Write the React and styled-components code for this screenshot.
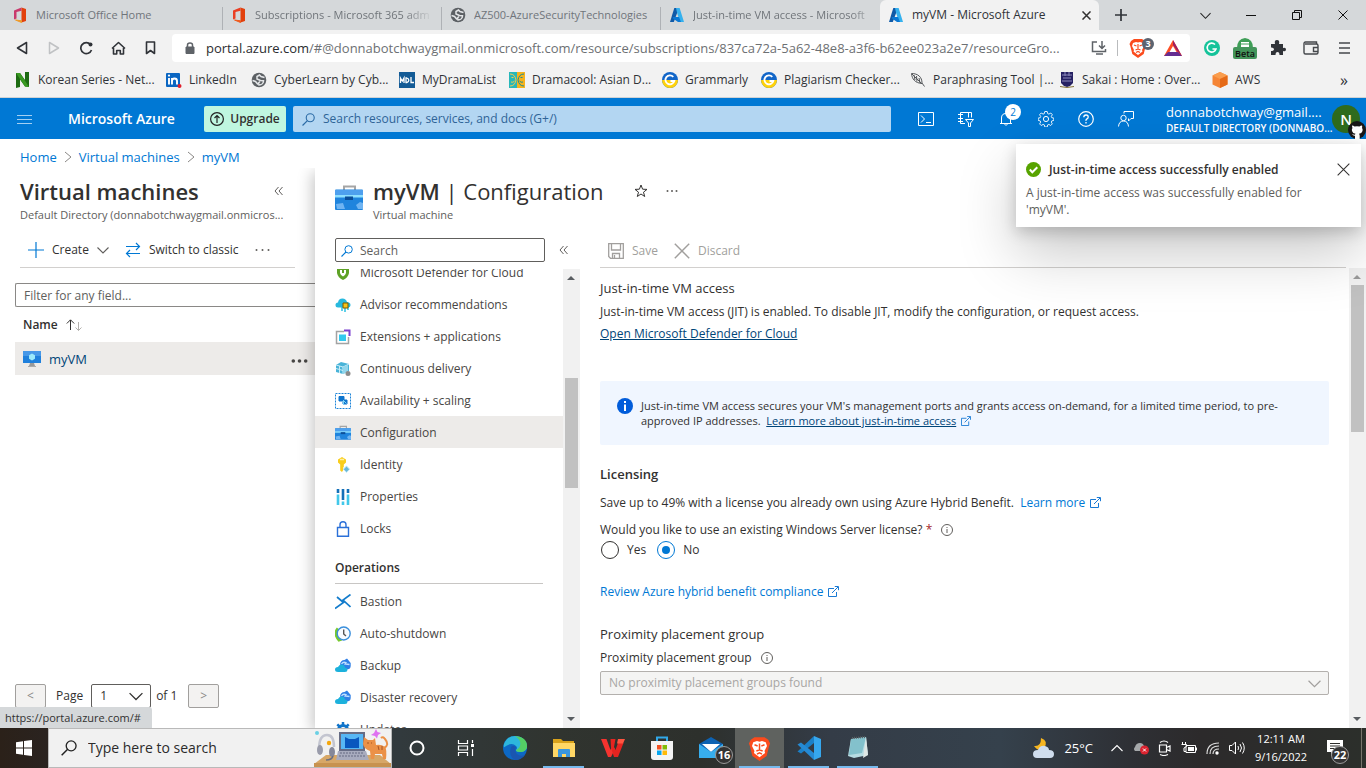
import React, { useLayoutEffect, useRef } from "react";
import styled, { createGlobalStyle, css } from "styled-components";

const Global = createGlobalStyle`
  * { box-sizing: border-box; }
  body { margin: 0; background: #fff; }
  body, button, input, select, table {
    font-family: "Open Sans", "Noto Sans", "Liberation Sans", sans-serif;
    font-size: 12px;
    line-height: 16px;
    color: #323130;
  }
  button { border: 0; padding: 0; background: none; }
  h1, h2, h3, p, ul { margin: 0; padding: 0; font-size: inherit; font-weight: inherit; }
  li { list-style: none; }
  a { color: #0078d4; text-decoration: none; }
  svg { display: block; flex: none; }
`;

const center = css`display: flex; align-items: center; justify-content: center;`;

const Screen = styled.div`
  height: 100vh;
  display: flex;
  flex-direction: column;
  overflow: hidden;
`;

/* ---------- browser chrome ---------- */
const TabStrip = styled.nav`
  flex: none;
  height: 30px;
  display: flex;
  padding-left: 4px;
  background: #d5d8da;
`;
const Tab = styled.a`
  flex: 0 1 219px;
  min-width: 0;
  display: flex;
  align-items: center;
  gap: 8px;
  padding-left: 8px;
  font-size: ${p => (p.$active ? 12 : 11)}px;
  color: ${p => (p.$active ? "#303338" : "#70757a")};
  background: ${p => (p.$active ? "#f2f2f2" : "transparent")};
  border-radius: ${p => (p.$active ? "6px 6px 0 0" : "0")};
`;
const TabText = styled.span`
  flex: 1;
  overflow: hidden;
  white-space: nowrap;
  ${p => p.$fade && css`mask-image: linear-gradient(to right, #000 84%, transparent);`}
`;
const TabRule = styled.span`
  width: 1px;
  height: 23px;
  align-self: flex-end;
  background: #aeb1b5;
`;
const TabClose = styled.button`
  ${center}
  width: 26px;
  height: 26px;
`;
const NewTab = styled.button`
  ${center}
  width: 44px;
`;
const WindowButtons = styled.div`
  margin-left: auto;
  display: flex;
`;
const WindowButton = styled.button`
  ${center}
  width: 46px;
`;
const AddressRow = styled.div`
  flex: none;
  height: 34px;
  display: flex;
  align-items: center;
  padding: 2px 6px 0 6px;
  background: #f2f2f2;
`;
const NavButtons = styled.div`
  display: flex;
  gap: ${p => p.$gap || 0}px;
`;
const NavButton = styled.button`
  ${center}
  width: 32px;
  height: 28px;
`;
const UrlBox = styled.div`
  flex: 1;
  min-width: 0;
  height: 28px;
  margin: 0 6px;
  display: flex;
  align-items: center;
  gap: 10px;
  padding: 0 8px 0 12px;
  background: #fff;
  border-radius: 4px;
`;
const UrlText = styled.span`
  flex: 1;
  min-width: 0;
  overflow: hidden;
  white-space: nowrap;
  text-overflow: ellipsis;
  font-size: 13px;
  line-height: 20px;
  color: #6d7073;
`;
const UrlHost = styled.span`color: #2b2d30;`;
const UrlRule = styled.span`
  width: 1px;
  height: 16px;
  background: #b9bbbd;
`;
const Bookmarks = styled.nav`
  flex: none;
  height: 34px;
  display: flex;
  align-items: center;
  padding: 0 18px 1px 15px;
  background: #f2f2f2;
  border-bottom: 1px solid #d0d2d4;
`;
const Bookmark = styled.a`
  flex: 0 1 ${p => p.$w}px;
  min-width: 0;
  display: flex;
  align-items: center;
  gap: 7px;
  white-space: nowrap;
  color: #303338;
`;
const More = styled.button`
  margin-left: auto;
  font-size: 16px;
  color: #303338;
`;

/* ---------- portal bar ---------- */
const PortalBar = styled.header`
  flex: none;
  height: 41px;
  display: flex;
  align-items: center;
  padding: 1px 6px 0 16px;
  background: #0078d4;
  color: #fff;
`;
const MenuButton = styled.button`
  ${center}
  width: 16px;
  height: 24px;
`;
const Brand = styled.a`
  width: 136px;
  margin-left: 36px;
  font-size: 14px;
  line-height: 20px;
  font-weight: 600;
  color: #fff;
  white-space: nowrap;
`;
const Upgrade = styled.button`
  ${center}
  gap: 6px;
  width: 82px;
  height: 26px;
  border-radius: 2px;
  background: #bff6e0;
  font-weight: 600;
`;
const GlobalSearch = styled.label`
  flex: 1 1 598px;
  max-width: 598px;
  height: 26px;
  margin-left: 7px;
  display: flex;
  align-items: center;
  gap: 8px;
  padding-left: 9px;
  border-radius: 2px;
  background: #b3d6f2;
`;
const PlainInput = styled.input`
  flex: 1;
  min-width: 0;
  padding: 0;
  border: 0;
  outline: 0;
  background: transparent;
  &::placeholder { color: ${p => p.$tone || "#605e5c"}; opacity: 1; }
`;
const PortalIcons = styled.div`
  display: flex;
  margin-left: auto;
`;
const PortalIcon = styled.button`
  ${center}
  position: relative;
  width: 40px;
  height: 40px;
`;
const CountBadge = styled.span`
  ${center}
  position: absolute;
  top: 5px;
  right: 5px;
  width: 16px;
  height: 16px;
  border-radius: 8px;
  background: #fff;
  color: #0078d4;
  font-size: 10px;
`;
const Account = styled.div`
  width: 160px;
  margin-left: 20px;
  padding-top: 1px;
  white-space: nowrap;
`;
const AccountName = styled.div`
  font-size: 13px;
  line-height: 16px;
`;
const AccountDirectory = styled.div`
  font-size: 10px;
  line-height: 16px;
  font-weight: 600;
`;
const Avatar = styled.button`
  ${center}
  position: relative;
  width: 28px;
  height: 28px;
  margin-left: 6px;
  border-radius: 14px;
  background: #2f6b1d;
  color: #fff;
  font-size: 15px;
  font-weight: 600;
`;
const AvatarBadge = styled.span`
  position: absolute;
  left: 16px;
  top: 16px;
`;

/* ---------- portal body ---------- */
const Portal = styled.main`
  position: relative;
  flex: 1;
  min-height: 0;
  display: flex;
  flex-direction: column;
`;
const Breadcrumb = styled.nav`
  flex: none;
  height: 29px;
  display: flex;
  align-items: center;
  gap: 7px;
  padding: 6px 20px 0;
  font-size: 13px;
`;
const Blades = styled.div`
  flex: 1;
  min-height: 0;
  display: flex;
`;
const ListBlade = styled.section`
  flex: none;
  width: 315px;
  display: flex;
  flex-direction: column;
  overflow: hidden;
`;
const BladeHead = styled.div`
  height: 56px;
  padding: 8px 20px 0;
`;
const TitleRow = styled.div`
  display: flex;
  align-items: center;
  justify-content: space-between;
  padding-right: 12px;
`;
const Title = styled.h1`
  font-size: 22px;
  line-height: 30px;
  font-weight: 600;
  white-space: nowrap;
`;
const Light = styled.span`font-weight: 400;`;
const Subtitle = styled.p`
  font-size: 11px;
  line-height: 18px;
  color: #605e5c;
  white-space: nowrap;
`;
const Commands = styled.div`
  flex: none;
  height: 44px;
  margin: 0 20px;
  display: flex;
  align-items: center;
  padding: 9px 0 0 8px;
  border-bottom: 1px solid #d2d0ce;
`;
const Command = styled.button`
  display: flex;
  align-items: center;
  gap: 8px;
  margin-right: 16px;
  color: ${p => (p.disabled ? "#a19f9d" : "#323130")};
`;
const Filter = styled.input`
  flex: none;
  height: 24px;
  margin: 15px 0 0 15px;
  padding: 0 8px;
  border: 1px solid #8a8886;
  border-right: 0;
  border-radius: 2px 0 0 2px;
  outline: 0;
  &::placeholder { color: #605e5c; opacity: 1; }
`;
const Grid = styled.table`
  margin-left: 15px;
  border-collapse: collapse;
  th { height: 35px; padding: 0 8px; text-align: left; font-weight: 600; }
  td { height: 33px; padding: 0 5px 0 8px; background: #edebe9; }
  td:last-child { width: 32px; }
`;
const Inline = styled.span`
  display: flex;
  align-items: center;
  gap: ${p => p.$gap || 8}px;
`;
const VmLink = styled.a`
  display: flex;
  align-items: center;
  gap: 8px;
  font-size: 13px;
  line-height: 18px;
  color: #004578;
`;
const Pager = styled.div`
  margin-top: auto;
  padding: 0 15px 20px;
  display: flex;
  align-items: center;
`;
const PageButton = styled.button`
  width: 31px;
  height: 24px;
  border: 1px solid #a19f9d;
  border-radius: 2px;
  background: #f3f2f1;
  color: #8a8886;
`;
const PageLabel = styled.label`
  display: flex;
  align-items: center;
  gap: 8px;
  margin: 0 5px 0 10px;
`;
const PageOf = styled.span`width: 32px;`;
const SelectWrap = styled.span`
  display: grid;
  align-items: center;
  height: 24px;
  width: ${p => p.$w || "100%"};
  select, svg { grid-area: 1 / 1; }
  svg { justify-self: end; margin-right: 8px; pointer-events: none; }
`;
const Select = styled.select`
  appearance: none;
  width: 100%;
  height: 24px;
  padding: 0 8px;
  border: 1px solid #605e5c;
  border-radius: 2px;
  background: #fff;
  opacity: 1;
  &:disabled { color: #a8a6a4; border-color: #b3b0ad; background: #f4f4f3; }
`;
const StatusBubble = styled.div`
  position: absolute;
  left: 0;
  bottom: 0;
  width: 152px;
  height: 21px;
  padding: 3px 5px;
  background: #d5d8da;
  border-radius: 0 3px 0 0;
  font-size: 11px;
  white-space: nowrap;
`;

const VmBlade = styled.section`
  flex: 1;
  min-width: 0;
  display: flex;
  flex-direction: column;
  background: #fff;
  box-shadow: -3px 4px 14px rgba(0, 0, 0, 0.22);
  clip-path: inset(0 0 0 -20px);
`;
const VmHead = styled.div`
  flex: none;
  height: 70px;
  display: flex;
  padding: 8px 20px 0;
`;
const VmIcon = styled.span`
  width: 38px;
  padding-top: 8px;
`;
const HeadActions = styled.div`
  display: flex;
  align-items: center;
  gap: 18px;
  height: 30px;
  margin-left: 30px;
`;
const VmBody = styled.div`
  flex: 1;
  min-height: 0;
  display: flex;
`;
const Side = styled.aside`
  flex: none;
  width: 265px;
  display: flex;
  flex-direction: column;
`;
const SideTop = styled.div`
  flex: none;
  display: flex;
  align-items: center;
  gap: 14px;
  padding-left: 20px;
  height: 24px;
  margin-bottom: 7px;
`;
const MenuSearch = styled.label`
  width: 210px;
  height: 24px;
  display: flex;
  align-items: center;
  gap: 7px;
  padding: 1px 5px 0;
  border: 1px solid #605e5c;
  border-radius: 2px;
`;
const SideScroll = styled.div`
  flex: 1;
  min-height: 0;
  display: flex;
`;
const MenuView = styled.nav`
  flex: 1;
  overflow: auto;
  scrollbar-width: none;
`;
const MenuItem = styled.a`
  height: 32px;
  display: flex;
  align-items: center;
  gap: 9px;
  padding: 2px 0 0 20px;
  color: #484644;
  background: ${p => (p.$on ? "#edebe9" : "transparent")};
`;
const MenuHeading = styled.h3`
  height: 40px;
  margin: 0 20px 1px;
  padding-top: 16px;
  font-weight: 600;
  border-bottom: 1px solid #c8c6c4;
`;
const Track = styled.div`
  flex: none;
  width: 17px;
  display: flex;
  flex-direction: column;
  align-items: center;
  justify-content: space-between;
  background: #f1f1f1;
`;
const TrackEnd = styled.span`
  ${center}
  height: 17px;
`;
const TrackRun = styled.div`
  flex: 1;
  padding-top: ${p => p.$from}px;
`;
const Thumb = styled.div`
  width: 13px;
  height: ${p => p.$size}px;
  background: #c1c1c1;
`;
const Work = styled.div`
  flex: 1;
  min-width: 0;
  display: flex;
  flex-direction: column;
`;
const WorkCommands = styled(Commands)`
  height: 30px;
  padding: 0 0 4px 8px;
`;
const WorkScroll = styled.div`
  flex: 1;
  min-height: 0;
  display: flex;
`;
const Form = styled.div`
  flex: 1;
  min-width: 0;
  padding: 12px 20px 0;
  overflow: hidden;
`;
const Section = styled.section`margin-bottom: ${p => p.$after}px;`;
const Heading = styled.h2`
  font-size: 13px;
  line-height: 16px;
  font-weight: ${p => (p.$strong ? 600 : 400)};
  margin-bottom: ${p => p.$after}px;
`;
const Line = styled.p`
  margin-bottom: ${p => p.$after || 0}px;
`;
const DarkLink = styled.a`
  color: #004578;
  text-decoration: underline;
`;
const OutLink = styled.a`
  svg { display: inline-block; margin-left: 5px; vertical-align: -1px; }
`;
const InfoBox = styled.div`
  min-height: 64px;
  display: flex;
  gap: 8px;
  padding: 17px 16px 17px 17px;
  border-radius: 2px;
  background: #f0f6ff;
  font-size: 11px;
  line-height: 15px;
`;
const Required = styled.span`color: #a4262c;`;
const FieldLabel = styled.label`
  display: block;
  margin-bottom: 5px;
`;
const Radios = styled.div`
  display: flex;
  gap: 10px;
  height: 20px;
  margin-top: 2px;
`;
const RadioLabel = styled.label`
  display: flex;
  align-items: center;
  gap: 8px;
`;
const Radio = styled.input`
  appearance: none;
  ${center}
  width: 18px;
  height: 18px;
  margin: 0 0 0 1px;
  border: 1px solid #323130;
  border-radius: 9px;
  &:checked { border-color: #0078d4; }
  &:checked::after {
    content: "";
    width: 8px;
    height: 8px;
    border-radius: 4px;
    background: #0078d4;
  }
`;

const Toast = styled.div`
  position: absolute;
  top: 5px;
  right: 5px;
  width: 345px;
  height: 83px;
  padding: 15px 11px 0 10px;
  background: #fff;
  box-shadow: 0 26px 58px rgba(0, 0, 0, 0.22), 0 5px 14px rgba(0, 0, 0, 0.18);
  line-height: 17px;
  color: #605e5c;
`;
const ToastHead = styled.div`
  display: flex;
  align-items: center;
  gap: 8px;
  height: 20px;
  margin-bottom: 5px;
  font-weight: 600;
  color: #323130;
`;
const ToastBody = styled.p`padding-right: 28px;`;
const ToastClose = styled.button`margin-left: auto;`;

/* ---------- desktop taskbar ---------- */
const Taskbar = styled.footer`
  flex: none;
  height: 40px;
  display: flex;
  background: linear-gradient(90deg, #2b2119 0, #2a2320 48px, #323a3d 400px, #30342f 560px, #2d302c 700px, #343c47 830px, #35414c 1000px, #2e3035 1130px, #2c2a2b 1200px, #2c2f2b 1366px);
  color: #fff;
`;
const StartButton = styled.button`
  ${center}
  width: 48px;
`;
const TaskSearch = styled.label`
  flex: 0 1 344px;
  display: flex;
  align-items: center;
  gap: 11px;
  padding-left: 12px;
  background: #f1f1f1;
  border: 1px solid #b9b9b9;
  input { font-size: 14px; line-height: 20px; }
`;
const Task = styled.button`
  ${center}
  position: relative;
  width: 49px;
  background: ${p => (p.$active ? "#5f625f" : "transparent")};
`;
const TaskLine = styled.span`
  position: absolute;
  bottom: 0;
  left: 4px;
  right: 4px;
  height: 2px;
  background: #76b9ed;
`;
const TaskCount = styled.span`
  ${center}
  position: absolute;
  right: ${p => p.$right}px;
  bottom: 4px;
  width: 18px;
  height: 18px;
  border: 1px solid #9a9a9a;
  border-radius: 9px;
  background: #333;
  color: #fff;
  font-size: 11px;
  font-weight: 700;
`;
const Tray = styled.div`
  margin-left: auto;
  display: flex;
  align-items: center;
`;
const Weather = styled.button`
  display: flex;
  align-items: center;
  gap: 8px;
  margin-right: 12px;
  color: #fff;
  font-size: 13px;
`;
const TrayButton = styled.button`
  ${center}
  width: 24px;
  height: 40px;
`;
const Clock = styled.button`
  width: 64px;
  color: #fff;
  font-size: 11px;
  line-height: 18px;
  text-align: center;
  white-space: nowrap;
`;
const Notices = styled.button`
  ${center}
  position: relative;
  width: 49px;
  height: 40px;
  padding-right: 4px;
  border-right: 1px solid #77746c;
  margin-right: 4px;
`;

/* ---------- drawings ---------- */
const Svg = ({ w = 16, h, box, children, ...rest }) => (
  <svg width={w} height={h || w} viewBox={box || `0 0 ${w} ${h || w}`} fill="none" aria-hidden="true" {...rest}>{children}</svg>
);
const Office = ({ left = "#ea3e23", top = "#ef5a1c" }) => (
  <Svg>
    <path d="M9.500.500 2 3.500v9l2.500-1V5l5-1.300z" fill={left} />
    <path d="M9.500.500 14 2v12l-4.500 1.500z" fill="#e2400d" />
    <path d="m3.500 13 6 .8v1.700z" fill={top} stroke={top} />
  </Svg>
);
const Globe = () => (
  <Svg>
    <circle cx="8" cy="8" r="7.300" fill="#5c6064" />
    <path d="M13.500 5.500 10 4.500 8.500 3 6 4.500V7l3.500 1.500 3 .2c0 2.500-2 4.300-4.500 4.300l-.5-2L9 9.500M1.500 8.500l3 1 2.500 3" stroke="#e4e6e8" strokeWidth="1.500" />
  </Svg>
);
const AzureMark = () => (
  <Svg>
    <path d="M5.300 1H10L4.800 15H1z" fill="#0f5aa8" />
    <path d="M7 1h3.600L15 15h-4L8.400 7z" fill="#35b1ee" />
    <path d="M4 10h6l2 5H9L4 11.500z" fill="#0a78d4" />
  </Svg>
);
const Cross = ({ s = 10, c = "#323130", t = 1 }) => (
  <Svg w={s} box="0 0 10 10"><path d="m.500.500 9 9m0-9-9 9" stroke={c} strokeWidth={t} /></Svg>
);
const Chevron = ({ w = 12, c = "#605e5c", up }) => (
  <Svg w={w} h={w} box="0 0 12 12"><path d={up ? "m.500 9 5.500-5.500L11.500 9" : "m.500 3.500 5.500 5.500 5.500-5.500"} stroke={c} strokeWidth="1.100" /></Svg>
);
const Crumb = () => <Svg w={8} h={12}><path d="m1 1 6 5-6 5" stroke="#8a8886" /></Svg>;
const Collapse = () => <Svg w={9} h={10}><path d="M4.500 1 1 5l3.500 4M8.500 1 5 5l3.500 4" stroke="#605e5c" /></Svg>;
const Dots = ({ w = 15, r = 1, c = "#605e5c" }) => (
  <Svg w={w} h={4} box={`0 0 ${w} 4`}>{[r + 0.5, w / 2, w - r - 0.5].map(x => <circle key={x} cx={x} cy="2" r={r} fill={c} />)}</Svg>
);
const Lens = ({ s = 12, c = "#0078d4" }) => (
  <Svg w={s} box="0 0 12 12"><circle cx="7.600" cy="4.400" r="3.700" stroke={c} /><path d="M5 7 .500 11.500" stroke={c} strokeWidth="1.100" /></Svg>
);
const External = ({ s = 11 }) => (
  <Svg w={s} box="0 0 11 11"><path d="M6 2.500H.500v8h8V6M4 7l6-6M6.800.500h3.700v3.700" stroke="#1a7ad4" /></Svg>
);
const InfoRing = () => (
  <Svg w={12}><circle cx="6" cy="6" r="5.500" stroke="#605e5c" /><path d="M6 5v4M6 3v1" stroke="#605e5c" /></Svg>
);
const Arrow = ({ up, c = "#595d61" }) => <Svg w={9} h={5}><path d={up ? "M0 5h8L4 1z" : "M0 0h8L4 4z"} fill={c} /></Svg>;
const Toolbox = ({ s = 16 }) => (
  <Svg w={s} box="0 0 28 28">
    <path d="M9 6V2.500h11V6" stroke="#a5a5a5" strokeWidth="2" />
    <rect x="0" y="5.500" width="28" height="20.500" rx="1" fill="#1f84dd" />
    <path d="M0 6h28v6H0z" fill="#4ea0ee" /><path d="M0 11h28v2.500H0z" fill="#8fe0ff" />
    <rect x="10" y="12.500" width="8" height="3.500" fill="#0b4f99" />
    <path d="m1 20 7-1 2 6H2zM21 21l4-3 3 1v6h-5z" fill="#6fb4f2" />
  </Svg>
);
const Lion = () => (
  <>
    <path d="m6 1-3 2-1.500 3 .8 2 2 8 5.700 4 5.700-4 2-8 .8-2L17 3l-3-2z" fill="#fb4b1d" />
    <path d="m5 5 3-1 2 .6L12 4l3 1 1 3-2 4 .5 1.500L10 17l-4.500-3.500L6 12 4 8z" fill="#fff" />
    <path d="m6 7 2.500 1M14 7l-2.500 1M10 6v5m-2.500 1 2.500-1 2.500 1M8 14.500l2-1 2 1" stroke="#fb4b1d" strokeWidth="1.200" />
  </>
);
const Grammarly = () => (
  <Svg>
    <circle cx="8" cy="8" r="8" fill="#1266c8" /><path d="M0 8h16a8 8 0 0 1-16 0" fill="#ffd20a" />
    <path d="M11.300 4.800A4.500 4.500 0 1 0 12.300 9H8.500" stroke="#fff" strokeWidth="1.800" />
  </Svg>
);

const bookmarks = [
  ["Korean Series - Net...", 151, <Svg><path d="M1 1h4l5 7V0h4v15l-4-.5-5-7V15l-4 1z" fill="#1d6b12" /><path d="M1 1h4l9 14-4-.5z" fill="#3a9a22" /></Svg>],
  ["LinkedIn", 85, <Svg><rect y="1" width="14" height="14" rx="1" fill="#0a66c2" /><path d="M3 6v6.500M6 6v6.500M6 9q0-2.500 2.500-2.500T11 9v3.500" stroke="#fff" strokeWidth="1.900" /><circle cx="3" cy="3.600" r="1.100" fill="#fff" /><circle cx="13.500" cy="14" r="2" fill="#e01e2b" /></Svg>],
  ["CyberLearn by Cyb...", 148, <Globe />],
  ["MyDramaList", 110, <Svg><path d="M0 0h16v16H0z" fill="#135b96" /><path d="M1.500 11V6L3.300 9 5 6v5M7 6v4.500h.8q2-.5 2-2.200T7.800 6zM12 5v5.500h3" stroke="#fff" strokeWidth="1.300" /></Svg>],
  ["Dramacool: Asian D...", 153, <Svg><path d="M0 0h8v16H0z" fill="#27b7ba" /><path d="M8 0h8v16H8z" fill="#f6b21b" /><path d="M1 2q5 0 6 6-1 6-6 6M2.500 5.500h2M2 10q2 1 3.500-1" stroke="#f6c94a" /><path d="M15 2q-5 0-6 6 1 6 6 6m-1.500-8.500h-2M14 10q-2 1-3.500-1" stroke="#188f9a" /></Svg>],
  ["Grammarly", 99, <Grammarly />],
  ["Plagiarism Checker...", 149, <Grammarly />],
  ["Paraphrasing Tool |...", 149, <Svg><path d="M1.500 1.500C8 1.500 12 5 12 11l2.500 3.500M1.500 1.500C2 7 5 11 12 11.500M2 2l10 10M4 3l1 5M6.500 4 7 9.500M9 6l1 5" stroke="#55585b" /></Svg>],
  ["Sakai : Home : Over...", 153, <Svg><path d="M2 0h12v11q-2 3-6 4-4-1-6-4z" fill="#262163" /><path d="M3 3h10M4 6h8M3 9h10M6 0v4m4-4v4" stroke="#8d8bbd" /><path d="M1 14.500q7 2 14 0" stroke="#857339" /></Svg>],
  ["AWS", 90, <Svg><path d="m8 0 7.500 3.500v9L8 16 .500 12.500v-9z" fill="#f58536" /><path d="m8 0 7.500 3.500L8 7 .500 3.500z" fill="#fa9d4d" /><path d="M8 7v9l7.500-3.500v-9z" fill="#e56a17" /></Svg>],
];

const Recovery = () => (
  <Svg>
    <path d="M5 6.500Q5.500 2 9.500 2l2.500-1.500L15.700 5v3q0 3.500-4.700 3.500z" fill="#2f7fe6" />
    <path d="M6.500 6q1.500-2.500 4.500-1.500L10 6l4.500.5" stroke="#bfe0ff" strokeWidth="1.300" />
    <path d="M3 14q-3 0-3-2.500T3 9q1-2.500 3.500-2.500 3 0 3.500 3 2.500.2 2.500 2.300Q12.500 14 10 14z" fill="#1cb1dc" />
  </Svg>
);
const menuIcons = {
  shield: <Svg><path d="M2 1h12v7q-1 5-6 7-5-2-6-7z" fill="#5ea226" /><path d="M5 5h6v3q-1 3-3 3.500Q6 11 5 8z" fill="#fff" /><path d="M8 5v3" stroke="#5ea226" strokeWidth="2" /></Svg>,
  advisor: <Svg><path d="M3 10.500Q.500 10.500.500 8T3 5.500q.5-4 4.500-4 3.500 0 4.500 3.500 3.500.3 3.500 3 0 2.500-3 2.500z" fill="#27b9de" /><path d="M7 10v4m3-4v5m3-5v3" stroke="#2cc1e2" strokeWidth="1.500" /><path d="M8 6h5v5H8z" fill="#f6c317" stroke="#7b5b00" /></Svg>,
  extensions: <Svg><path d="M9 2.500H1.500v12h12V8" stroke="#a3a3a3" strokeWidth="1.500" /><path d="M4 5.500h7v6.500H4z" fill="#32c8ee" /><path d="M9 1.500h5.500V7" stroke="#7b3fd0" strokeWidth="2" /></Svg>,
  delivery: <Svg><path d="m1 4 5-3 8 2v7l-6 3-7-2z" fill="#49b3d8" /><path d="m1 4 7 2 6-3M8 6v7M4.500 5v7M1 7.500l7 2" stroke="#c9eef9" /><path d="m8 6 5-2v7l-5 2z" fill="#92d6ec" /><circle cx="13" cy="12.500" r="2.500" fill="#8b8b8b" /></Svg>,
  scaling: <Svg><rect x=".500" y=".500" width="15" height="15" stroke="#1c84d8" strokeDasharray="2 1" /><path d="M4 3.500h5V8H4zM9 7h3v4H8V9" fill="#0e75cd" stroke="#0e75cd" /><path d="m8 7 3.500 3.500m-3-3V12" stroke="#7ad3f7" /></Svg>,
  identity: <Svg><path d="m7 0 4 2.500v3L8.800 7.500V10l-1 1 1 1.300L7 15l-1.800-1.500V7.500L3 5.500v-3z" fill="#f9cd1c" /><path d="M5 2.500h4" stroke="#fff0a0" strokeWidth="1.500" /><path d="m11.500 9 3.200 3.200-3.200 3.200-3.200-3.200z" fill="#68b6d8" stroke="#c8ecf8" /></Svg>,
  properties: <Svg><path d="M3 0v4M13 0v4M8 0v11" stroke="#1470b8" strokeWidth="2.600" /><path d="M3 5.500V16M13 5.500V16M8 12.500V16" stroke="#42c8ea" strokeWidth="2.600" /></Svg>,
  locks: <Svg><path d="M2.500 6.500h11v8.800h-11zM5 6.500V3.800q0-3 3-3t3 3v2.700" stroke="#2b70d8" strokeWidth="1.400" /></Svg>,
  bastion: <Svg><path d="m2 3 6.500 5.500L0 14.500M15.500.500 8 6l7.500 7" stroke="#137ccc" strokeWidth="1.700" /></Svg>,
  shutdown: <Svg><path d="M3 2.500q-4.500 5 1 11.500l2.500-1" stroke="#77c82f" strokeWidth="3" /><circle cx="8.700" cy="7.500" r="6.500" fill="#f8fbff" stroke="#3a8fdc" strokeWidth="1.400" /><path d="M8.700 3.500V8l2.300 2" stroke="#555" strokeWidth="1.400" /></Svg>,
  recovery: <Recovery />,
  updates: <Svg><circle cx="8" cy="8" r="4.500" stroke="#0f74ca" strokeWidth="3" /><path d="M8 0v3M8 13v3M0 8h3M13 8h3M2.300 2.300l2.200 2.200M11.500 11.500l2.200 2.200M13.700 2.300l-2.200 2.200M4.500 11.500l-2.200 2.200" stroke="#0f74ca" strokeWidth="2.500" /></Svg>,
  toolbox: <Toolbox />,
};
const settingsItems = [
  ["Microsoft Defender for Cloud", "shield"], ["Advisor recommendations", "advisor"],
  ["Extensions + applications", "extensions"], ["Continuous delivery", "delivery"],
  ["Availability + scaling", "scaling"], ["Configuration", "toolbox"],
  ["Identity", "identity"], ["Properties", "properties"], ["Locks", "locks"],
];
const operationItems = [
  ["Bastion", "bastion"], ["Auto-shutdown", "shutdown"], ["Backup", "recovery"],
  ["Disaster recovery", "recovery"], ["Updates", "updates"],
];

const portalIcons = [
  ["Cloud Shell", <Svg><path d="M.500 1.500h15v13H.500zM3 4.500l3.500 3.500L3 11.500M8 11.500h5" stroke="#fff" /></Svg>],
  ["Directories", <Svg><path d="M7 12.500H2.500V1.500h11v5M10.500 1.500v5M0 3.500h5M0 7.500h5M0 10.500h5M7.500 8.500h8L12.500 12v3.500h-2V12z" stroke="#fff" /></Svg>],
  ["Notifications", <Svg><path d="M2 12.500h12M3.500 12V7q0-4.500 4.500-4.500T12.500 7v5M6.500 13q1.500 3 3 0" stroke="#fff" /></Svg>],
  ["Settings", <Svg><circle cx="8" cy="8" r="2.600" stroke="#fff" /><path d="M6.800.500h2.400l.5 2.100 1.200.5L12.800 2l1.500 1.700-1 1.800.5 1.200 2 .4v2.300l-2 .5-.5 1.200 1 1.800-1.600 1.600-1.800-1.100-1.200.5-.5 2.100H6.800l-.5-2.100-1.200-.5-1.900 1.100-1.600-1.600 1.100-1.800-.5-1.200-2-.5V7.100l2-.4.5-1.200-1.100-1.800L3.200 2l1.900 1.100 1.200-.5z" stroke="#fff" strokeWidth=".900" /></Svg>],
  ["Help", <Svg><circle cx="8" cy="8" r="7.300" stroke="#fff" strokeWidth="1.200" /><path d="M5.800 6.300Q5.800 4 8 4t2.200 2q0 1.200-1.200 1.900T8 9.800M8 11v1.500" stroke="#fff" strokeWidth="1.300" /></Svg>],
  ["Feedback", <Svg><circle cx="5.500" cy="7" r="2.700" stroke="#fff" /><path d="M.500 15.500q.5-5.500 5-5.500t5 5.500M6 2.500v-2h9.500v7H13l-2.500 2.500V7.500" stroke="#fff" /></Svg>],
];

const tasks = [
  ["Cortana", <Svg w={16}><circle cx="8" cy="8" r="6.500" stroke="#fff" strokeWidth="2" /></Svg>],
  ["Task View", <Svg w={17} h={16}><path d="M1.500 0v3.500h9V0M1.500 16v-3.500h9V16M1.500 6h9v4h-9zM15.500 0v3M15.500 9v7" stroke="#fff" strokeWidth="1.200" /><path d="M14 4h3v3h-3z" fill="#fff" /></Svg>],
  ["Edge", <Svg w={24}><circle cx="12" cy="12" r="12" fill="#0d68c4" /><path d="M1 8Q4 0 12 0c7 0 12 5 12 10 0 4-3 6-7 6-3 0-4-1-4-2q2-2 0-4-4-4-10 0Q0 13 1 8" fill="#2db6dc" /><path d="M12 0q12 1 12 10c0 4-3 6-7 6-3 0-4-1-4-2 5-2 7-9-1-14" fill="#54cf65" /><path d="M8 11q2-2 5 0-2 4 1 7t8 1q-4 5-10 5-7-4-4-13" fill="#1a56b0" /></Svg>],
  ["Files", <Svg w={22} h={20}><path d="M0 1h8l2 2h11v4H0z" fill="#d9a21b" /><path d="M0 5h22v14H0z" fill="#ffd765" /><path d="M5 19v-7q0-1 1-1h10q1 0 1 1v7h-4v-3H9v3z" fill="#3a96dd" /></Svg>, true],
  ["WPS", <Svg w={24} h={20}><path d="M0 1h5.500l4 11L11 7l3 4-4 8H7z" fill="#f5332f" /><path d="M9.500 1h5L13 9l1.500 3L17 5h5.500L17 19h-4l-3-9z" fill="#e52420" /><path d="M17 1h7l-2 4.500h-6z" fill="#ff5540" /></Svg>],
  ["Store", <Svg w={24}><path d="M7 6V1.500h10V6" stroke="#31a8e8" strokeWidth="2" /><path d="M1 5h22v16q0 3-3 3H4q-3 0-3-3z" fill="#f4f4f4" /><path d="M7 9h4.500v4.500H7z" fill="#f35325" /><path d="M12.500 9H17v4.500h-4.500z" fill="#81bc06" /><path d="M7 14.500h4.500V19H7z" fill="#05a6f0" /><path d="M12.500 14.500H17V19h-4.500z" fill="#ffba08" /></Svg>],
  ["Mail", <Svg w={24} h={24}><path d="M0 8 12 1l12 7v14H0z" fill="#0d62b2" /><path d="M3 8h18l-9 8z" fill="#fff" /><path d="m0 8 12 8 12-8v14H0z" fill="#37aeee" /></Svg>, false, 16],
  ["Brave", <Svg w={25} box="0 0 20 20"><Lion /></Svg>, true],
  ["Code", <Svg w={24}><path d="M17 0v7L4 17.500.500 15.500z" fill="#1b80c8" /><path d="M17 24v-7L4 6.500.500 8.500z" fill="#258ad4" /><path d="m17 0 7 3v18l-7 3z" fill="#36a7ee" /></Svg>, true],
  ["Notepad", <Svg w={24}><path d="m5 3 15-2 2 18-14 3-6-2z" fill="#b7dce3" /><path d="M5 3 20 1l-4 16-13 2z" fill="#83c1cc" /><path d="m20 1 2 18-5 3z" fill="#dfe7e5" /><path d="m6 2 14-1" stroke="#595f62" strokeWidth="2" strokeDasharray="1 1" /></Svg>, true],
];

function VmMenu() {
  const view = useRef(null);
  useLayoutEffect(() => { view.current.scrollTop = 13; }, []);
  const item = ([label, icon]) => (
    <li key={label}><MenuItem href="#" $on={label === "Configuration"}>{menuIcons[icon]}{label}</MenuItem></li>
  );
  return (
    <MenuView ref={view} aria-label="myVM">
      <ul>{settingsItems.map(item)}</ul>
      <MenuHeading>Operations</MenuHeading>
      <ul>{operationItems.map(item)}</ul>
    </MenuView>
  );
}

const Scrollbar = ({ from, size, faded }) => (
  <Track>
    <TrackEnd><Arrow up c={faded ? "#9a9a9a" : undefined} /></TrackEnd>
    <TrackRun $from={from}><Thumb $size={size} /></TrackRun>
    <TrackEnd><Arrow /></TrackEnd>
  </Track>
);

function BrowserChrome() {
  return (
    <>
      <TabStrip>
        <Tab href="#"><Office left="#c93a6d" top="#ee9a2a" /><TabText>Microsoft Office Home</TabText><TabRule /></Tab>
        <Tab href="#"><Office /><TabText $fade>Subscriptions - Microsoft 365 adm</TabText><TabRule /></Tab>
        <Tab href="#"><Globe /><TabText>AZ500-AzureSecurityTechnologies</TabText><TabRule /></Tab>
        <Tab href="#"><AzureMark /><TabText $fade>Just-in-time VM access - Microsoft</TabText></Tab>
        <Tab href="#" $active><AzureMark /><TabText>myVM - Microsoft Azure</TabText><TabClose aria-label="Close tab"><Cross s={9} t={1.7} /></TabClose></Tab>
        <NewTab aria-label="New tab"><Svg w={12}><path d="M6 0v12M0 6h12" stroke="#303338" strokeWidth="1.700" /></Svg></NewTab>
        <WindowButtons>
          <WindowButton aria-label="Search tabs"><Chevron w={11} c="#222" /></WindowButton>
          <WindowButton aria-label="Minimize"><Svg w={10}><path d="M0 5.500h10" stroke="#111" /></Svg></WindowButton>
          <WindowButton aria-label="Restore"><Svg w={10}><path d="M.500 2.500h7v7h-7zM2.500 2V.500h7v7H8" stroke="#111" /></Svg></WindowButton>
          <WindowButton aria-label="Close"><Cross c="#111" /></WindowButton>
        </WindowButtons>
      </TabStrip>
      <AddressRow>
        <NavButtons>
          <NavButton aria-label="Back"><Svg w={12} h={14}><path d="M10.500 1.500v11L1.500 7z" stroke="#303338" strokeWidth="1.600" strokeLinejoin="round" /></Svg></NavButton>
          <NavButton aria-label="Forward"><Svg w={12} h={14}><path d="M1.500 1.500v11L10.500 7z" stroke="#c0c2c4" strokeWidth="1.500" strokeLinejoin="round" /></Svg></NavButton>
          <NavButton aria-label="Reload"><Svg w={14}><path d="M11.500 3.500A5.500 5.500 0 1 0 12.500 9" stroke="#303338" strokeWidth="1.700" /><circle cx="11.500" cy="3.500" r="2" fill="#303338" /></Svg></NavButton>
          <NavButton aria-label="Home"><Svg w={15} h={14}><path d="M1 7.500 7.500 1.500l6.500 6M2.500 7v6h3.200V9.500h3.600V13h3.200V7" stroke="#303338" strokeWidth="1.600" strokeLinejoin="round" /></Svg></NavButton>
          <NavButton aria-label="Bookmark"><Svg w={11} h={14}><path d="M1.500 1h8v11.500l-4-3-4 3z" stroke="#303338" strokeWidth="1.600" strokeLinejoin="round" /></Svg></NavButton>
        </NavButtons>
        <UrlBox>
          <Svg w={12} h={12}><path d="M2 5h8v6.500H2z" fill="#5f6368" stroke="#5f6368" /><path d="M3.500 5V3q0-2 2.500-2t2.500 2v2" stroke="#5f6368" strokeWidth="1.500" /></Svg>
          <UrlText><UrlHost>portal.azure.com</UrlHost>/#@donnabotchwaygmail.onmicrosoft.com/resource/subscriptions/837ca72a-5a62-48e8-a3f6-b62ee023a2e7/resourceGro...</UrlText>
          <Inline $gap={10}>
            <Svg w={16} h={14}><path d="M6 1H1.500v9.500h13V8M5 13h7M11 0v7M8 4.500l3 3 3-3" stroke="#5f6368" strokeWidth="1.500" /></Svg>
            <UrlRule />
            <Svg w={26} h={20}><Lion /><circle cx="20" cy="6" r="6" fill="#5c6370" /><text x="20" y="9" fontSize="9" fontWeight="700" textAnchor="middle" fill="#fff">3</text></Svg>
            <Svg w={18}><path d="M9 1 0 17h18z" fill="#ff4d23" /><path d="m0 17 4-4h10l4 4z" fill="#652d91" /><path d="m9 1 9 16-4-4-5-7z" fill="#9e1f63" /><path d="m9 7 3.500 6h-7z" fill="#fff" /></Svg>
          </Inline>
        </UrlBox>
        <NavButtons $gap={1}>
          <NavButton aria-label="Grammarly"><Svg><circle cx="8" cy="8" r="8" fill="#15c39a" /><path d="M11 4.500A4.500 4.500 0 1 0 12 9H8.500" stroke="#fff" strokeWidth="1.600" /></Svg></NavButton>
          <NavButton aria-label="Beta extension"><Svg w={24} h={22}><path d="M4 11q0-9 8-10 8 1 8 10z" fill="#3f9e57" /><path d="M8 5h8v5H8z" fill="#fff" /><path d="M8 7h8M10 5V3M14 5V3" stroke="#3f9e57" /><rect y="10" width="24" height="12" rx="2" fill="#43955a" /><text x="12" y="20" fontSize="9" fontWeight="600" textAnchor="middle" fill="#111">Beta</text></Svg></NavButton>
          <NavButton aria-label="Extensions"><Svg w={16}><path d="M1 4h4q-1-4 2-4t2 4h4v4q3-1 3 1.500T13 11v4H9.500q0-3-2-3t-2 3H1v-4q3 0 3-1.800T1 7.500z" fill="#303338" /></Svg></NavButton>
          <NavButton aria-label="Wallet"><Svg w={16} h={14}><path d="M13.500 3V1H2.500Q1 1 1 2.500v9Q1 13 2.500 13h11q1.500 0 1.500-1.500v-7Q15 3 13.500 3H2M15 6.500h-4.500v4H15" stroke="#45484c" strokeWidth="1.400" /></Svg></NavButton>
          <NavButton aria-label="Menu"><Svg w={11} h={12}><path d="M0 1h11M0 6h11M0 11h11" stroke="#45484c" strokeWidth="1.500" /></Svg></NavButton>
        </NavButtons>
      </AddressRow>
      <Bookmarks aria-label="Bookmarks">
        {bookmarks.map(([label, w, icon]) => <Bookmark href="#" key={label} $w={w}>{icon}{label}</Bookmark>)}
        <More aria-label="More bookmarks">»</More>
      </Bookmarks>
    </>
  );
}

function VirtualMachines() {
  return (
    <ListBlade>
      <BladeHead>
        <TitleRow>
          <Title>Virtual machines</Title>
          <button aria-label="Collapse list"><Collapse /></button>
        </TitleRow>
        <Subtitle>Default Directory (donnabotchwaygmail.onmicros...</Subtitle>
      </BladeHead>
      <Commands>
        <Command><Svg><path d="M8 0v16M0 8h16" stroke="#0078d4" strokeWidth="1.200" /></Svg>Create<Chevron /></Command>
        <Command><Svg><path d="M1 4.500h14M11 1l3.500 3.500L11 8M15 11.500H1M5 8l-3.500 3.500L5 15" stroke="#0078d4" strokeWidth="1.200" /></Svg>Switch to classic</Command>
        <Command aria-label="More"><Dots /></Command>
      </Commands>
      <Filter placeholder="Filter for any field..." aria-label="Filter" />
      <Grid>
        <thead><tr><th colSpan="2"><Inline>Name<Svg w={16} h={12}><path d="M4.500 11V1M.800 4.500l3.700-3.700 3.700 3.700" stroke="#323130" /><path d="M12.500 3v8.500M9.500 8.500l3 3 3-3" stroke="#b3b0ad" /></Svg></Inline></th></tr></thead>
        <tbody><tr>
          <td><VmLink href="#"><Svg w={18} h={16}><path d="M0 0h18v12H0z" fill="#1f80dc" /><path d="M0 0h18v5H0z" fill="#4698e8" /><path d="m9 2.500 3 1.700v3.600L9 9.500 6 7.800V4.200z" fill="#9be9fb" /><path d="M7 12h4l1 3H6z" fill="#999" /><path d="M5 15.500h8" stroke="#aaa" /></Svg>myVM</VmLink></td>
          <td><button aria-label="Row actions"><Dots w={17} r={1.8} c="#484644" /></button></td>
        </tr></tbody>
      </Grid>
      <Pager>
        <PageButton>&lt;</PageButton>
        <PageLabel>Page<SelectWrap $w="60px"><Select defaultValue="1"><option>1</option></Select><Chevron w={14} c="#323130" /></SelectWrap></PageLabel>
        <PageOf>of 1</PageOf>
        <PageButton>&gt;</PageButton>
      </Pager>
    </ListBlade>
  );
}

function Configuration() {
  return (
    <VmBlade>
      <VmHead>
        <VmIcon><Toolbox s={28} /></VmIcon>
        <div>
          <Title>myVM <Light>| Configuration</Light></Title>
          <Subtitle>Virtual machine</Subtitle>
        </div>
        <HeadActions>
          <button aria-label="Favorite"><Svg w={14}><path d="m7 1 1.600 4.200 4.400.2-3.500 2.800 1.200 4.300L7 10l-3.700 2.500 1.200-4.300L1 5.400l4.400-.2z" stroke="#323130" /></Svg></button>
          <button aria-label="More"><Dots w={12} /></button>
        </HeadActions>
      </VmHead>
      <VmBody>
        <Side>
          <SideTop>
            <MenuSearch><Lens /><PlainInput placeholder="Search" aria-label="Search menu" /></MenuSearch>
            <button aria-label="Collapse menu"><Collapse /></button>
          </SideTop>
          <SideScroll><VmMenu /><Scrollbar from={92} size={110} /></SideScroll>
        </Side>
        <Work>
          <WorkCommands>
            <Command disabled><Svg><path d="M.700.700h14.600v14.600H2.500L.700 13.500zM3.500 1v6h9V1M4.500 15v-4.500h7V15M6.500 12v3" stroke="#a19f9d" strokeWidth="1.300" /></Svg>Save</Command>
            <Command disabled><Cross s={16} c="#a19f9d" t={0.9} />Discard</Command>
          </WorkCommands>
          <WorkScroll>
            <Form>
              <Section $after={39}>
                <Heading $after={8}>Just-in-time VM access</Heading>
                <Line $after={6}>Just-in-time VM access (JIT) is enabled. To disable JIT, modify the configuration, or request access.</Line>
                <Line><DarkLink href="#">Open Microsoft Defender for Cloud</DarkLink></Line>
              </Section>
              <Section $after={21}>
                <InfoBox>
                  <Svg><circle cx="8" cy="8" r="8" fill="#015cda" /><path d="M8 6.500V13M8 3v2" stroke="#fff" strokeWidth="2" /></Svg>
                  <p>Just-in-time VM access secures your VM's management ports and grants access on-demand, for a limited time period, to pre-approved IP addresses. &nbsp;<OutLink href="#"><DarkLink as="span">Learn more about just-in-time access</DarkLink><External s={10} /></OutLink></p>
                </InfoBox>
              </Section>
              <Section $after={24}>
                <Heading $strong $after={13}>Licensing</Heading>
                <Line $after={11}>Save up to 49% with a license you already own using Azure Hybrid Benefit. &nbsp;<OutLink href="#">Learn more<External /></OutLink></Line>
                <Inline $gap={9}><span>Would you like to use an existing Windows Server license? <Required>*</Required></span><InfoRing /></Inline>
                <Radios role="radiogroup" aria-label="Windows Server license">
                  <RadioLabel><Radio type="radio" name="license" />Yes</RadioLabel>
                  <RadioLabel><Radio type="radio" name="license" defaultChecked />No</RadioLabel>
                </Radios>
              </Section>
              <Section $after={26}><OutLink href="#">Review Azure hybrid benefit compliance<External /></OutLink></Section>
              <Section $after={0}>
                <Heading $after={8}>Proximity placement group</Heading>
                <FieldLabel htmlFor="ppg"><Inline $gap={9}>Proximity placement group<InfoRing /></Inline></FieldLabel>
                <SelectWrap><Select id="ppg" disabled><option>No proximity placement groups found</option></Select><Chevron w={13} c="#a19f9d" /></SelectWrap>
              </Section>
            </Form>
            <Scrollbar from={0} size={147} faded />
          </WorkScroll>
        </Work>
      </VmBody>
    </VmBlade>
  );
}

function DesktopBar() {
  return (
    <Taskbar>
      <StartButton aria-label="Start"><Svg w={16}><path d="m0 2.300 7-1v6.200H0zM8 1.100 16 0v7.500H8zM0 8.500h7v6.200l-7-1zM8 8.500h8V16l-8-1.100z" fill="#fff" /></Svg></StartButton>
      <TaskSearch>
        <Lens s={16} c="#222" />
        <PlainInput placeholder="Type here to search" aria-label="Type here to search" $tone="#2b2b2b" />
        <Svg w={77} h={38}>
          <path d="M0 38v-3l12-9h54l11 9v3z" fill="#d7a767" /><path d="M0 34h77v4H0z" fill="#c7924f" />
          <circle cx="3" cy="4" r="2" fill="#6ad0e4" />
          <path d="M5 20q0-14 8-14 7 0 7 12" stroke="#c3c5d0" strokeWidth="2.500" /><ellipse cx="6" cy="21" rx="3" ry="5" fill="#9a9cab" /><ellipse cx="18" cy="23" rx="3" ry="5" fill="#85889a" /><circle cx="15" cy="14" r="2.200" fill="#f5a70d" /><path d="M19 27q-1 4-7 4" stroke="#6c6f80" strokeWidth="1.500" />
          <path d="M25 3h26v19H25z" fill="#666c85" /><path d="M27 5h22v15H27z" fill="#57b7f4" /><path d="m31 8 4 2h6l4-2v11H31z" fill="#0957be" /><path d="M24 22h28l3 9H22z" fill="#a8abbe" /><path d="M26 24h24M25 27h26" stroke="#666b82" strokeDasharray="2 1" />
          <path d="m62 0 1.500 3 3.500 1-3 2-1 3.500-2-2.500-4-1 3-2z" fill="#df72f1" />
          <path d="m50 8 4 3h5l2-2 1 7q5-1 9 2 2 2 1 12h-3l-1-5h-7l-1 5h-3l-1-8q-6-2-7-7z" fill="#eb9148" /><path d="M70 19q6-3 1-9-2-3-4-1" stroke="#eb9148" strokeWidth="2" /><path d="m64 17 1 4m3-4v4M53 14h2m2 0h1" stroke="#a85423" />
        </Svg>
      </TaskSearch>
      {tasks.map(([name, icon, open, count]) => (
        <Task key={name} aria-label={name} $active={name === "Brave"}>{icon}{open && <TaskLine />}{count && <TaskCount $right={2}>{count}</TaskCount>}</Task>
      ))}
      <Tray>
        <Weather><Svg w={24} h={22}><path d="M9 1q8 3 3 10-5 5-10-2 7 1 7-8" fill="#f6b51f" /><path d="M5 21q-4 0-4-4t5-4q2-5 7-4 4 1 4 4 5 0 5 4t-4 4z" fill="#cfdded" /></Svg>25°C</Weather>
        <TrayButton aria-label="Hidden icons"><Chevron c="#fff" up /></TrayButton>
        <TrayButton aria-label="OneDrive"><Svg w={16}><path d="M2 11Q0 9 2 7q1-4 5-4 3 0 4 3 3 0 3 3v2z" fill="#a5a8aa" /><circle cx="11.500" cy="10" r="4.500" fill="#db2330" /><path d="m10 8.500 3 3m0-3-3 3" stroke="#fff" /></Svg></TrayButton>
        <TrayButton aria-label="Meet now"><Svg w={14} h={16}><path d="M1.500 5h7v7h-7zM8.500 7.500 12 6v5L8.500 9.500M2 2.500Q6-.500 10 2.500M2 14.500q4 2 8 0" stroke="#fff" strokeWidth="1.200" /></Svg></TrayButton>
        <TrayButton aria-label="Battery"><Svg w={16} h={12}><path d="M5 3.500h9.500v7H5z" stroke="#fff" /><path d="M7 5h6v4H7zM15 5.500h1v3h-1z" fill="#fff" /><path d="M1.500 0v2M4.500 0v2M.500 2.500h5v2L3 6v3.500h2" stroke="#fff" /></Svg></TrayButton>
        <TrayButton aria-label="Network"><Svg w={14}><path d="M1 13Q1 2 13 2M4 13q0-8 9-8M7 13q0-5 6-5" stroke="#ddd" strokeWidth="1.200" /><circle cx="11" cy="12" r="1.700" fill="#fff" /></Svg></TrayButton>
        <TrayButton aria-label="Volume"><Svg w={16} h={14}><path d="M.500 4.500H3L6.500 1v12L3 9.500H.500zM9 5q1 2 0 4M11 3q3 4 0 8M13.500 1.500q3.500 5.500 0 11" stroke="#fff" /></Svg></TrayButton>
        <Clock>12:11 AM<br />9/16/2022</Clock>
        <Notices aria-label="Notifications"><Svg w={16} h={16}><path d="M0 0h16v12H8l-4 4v-4H0z" fill="#fff" /><path d="M3 3.500h10M3 6h10M3 8.500h7" stroke="#2d2d2b" /></Svg><TaskCount $right={12}>22</TaskCount></Notices>
      </Tray>
    </Taskbar>
  );
}

export default function App() {
  return (
    <Screen>
      <Global />
      <BrowserChrome />
      <PortalBar>
        <MenuButton aria-label="Show portal menu"><Svg w={15} h={11}><path d="M0 1.500h15M0 5.500h15M0 9.500h15" stroke="#a5d0f2" /></Svg></MenuButton>
        <Brand href="#">Microsoft Azure</Brand>
        <Upgrade><Svg w={14}><circle cx="7" cy="7" r="6.400" stroke="#222" strokeWidth="1.200" /><path d="M7 11V3.500M4.500 6 7 3.500 9.500 6" stroke="#222" strokeWidth="1.200" /></Svg>Upgrade</Upgrade>
        <GlobalSearch><Lens s={13} c="#2a6aa5" /><PlainInput $tone="#2f6497" placeholder="Search resources, services, and docs (G+/)" aria-label="Search resources" /></GlobalSearch>
        <PortalIcons>
          {portalIcons.map(([name, icon]) => <PortalIcon key={name} aria-label={name}>{icon}{name === "Notifications" && <CountBadge>2</CountBadge>}</PortalIcon>)}
        </PortalIcons>
        <Account>
          <AccountName>donnabotchway@gmail....</AccountName>
          <AccountDirectory>DEFAULT DIRECTORY (DONNABO...</AccountDirectory>
        </Account>
        <Avatar aria-label="Account">N<AvatarBadge><Svg w={18}><circle cx="9" cy="9" r="9" fill="#191717" /><path d="M4 4.500q1.500 0 2.500 1 2.500-.6 5 0 1-1 2.500-1 .5 1.500 0 2.500 1 1.200.5 3-.7 2.500-3.500 2.700.7 1 .7 2V18H7v-3.300Q5 15 4 13q2 1 3 .7 0-.7.500-1-2.800-.2-3.500-2.700-.5-1.800.5-3-.5-1-.5-2.500" fill="#fff" /></Svg></AvatarBadge></Avatar>
      </PortalBar>
      <Portal>
        <Breadcrumb aria-label="Breadcrumb"><a href="#">Home</a><Crumb /><a href="#">Virtual machines</a><Crumb /><a href="#">myVM</a></Breadcrumb>
        <Blades><VirtualMachines /><Configuration /></Blades>
        <StatusBubble>https://portal.azure.com/#</StatusBubble>
        <Toast role="status">
          <ToastHead>
            <Svg w={15}><circle cx="7.500" cy="7.500" r="7.500" fill="#57a300" /><path d="m3.800 7.500 2.500 2.700 5-5" stroke="#fff" strokeWidth="2" /></Svg>
            Just-in-time access successfully enabled
            <ToastClose aria-label="Dismiss"><Cross s={13} t={0.8} /></ToastClose>
          </ToastHead>
          <ToastBody>A just-in-time access was successfully enabled for 'myVM'.</ToastBody>
        </Toast>
      </Portal>
      <DesktopBar />
    </Screen>
  );
}
